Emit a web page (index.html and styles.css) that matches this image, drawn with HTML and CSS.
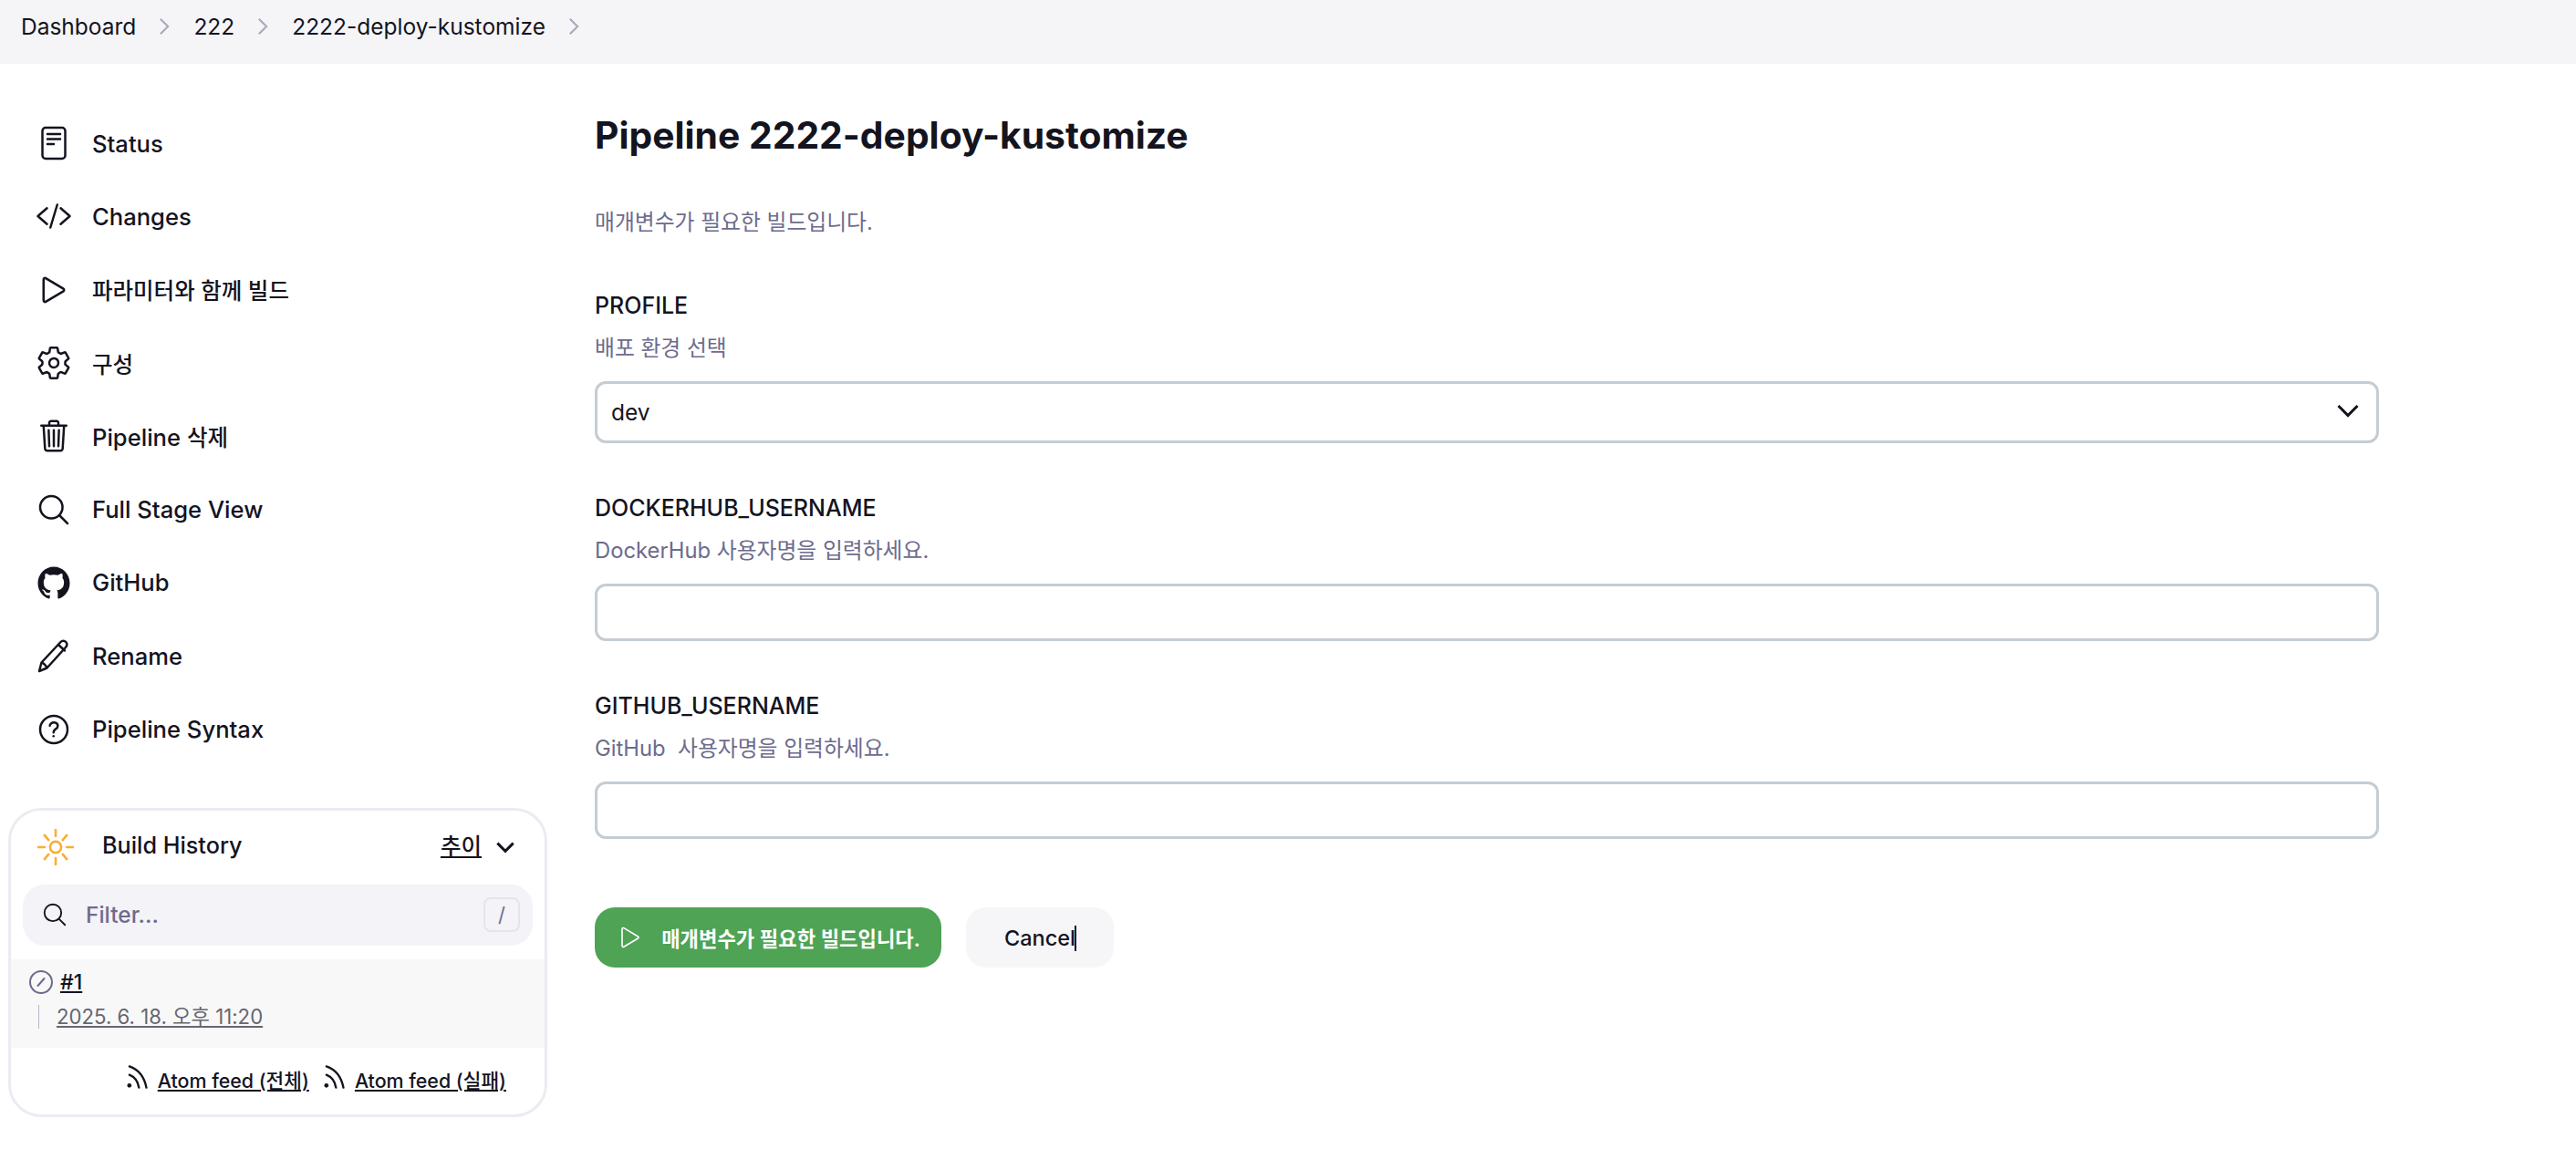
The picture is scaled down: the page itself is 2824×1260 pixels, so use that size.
FILE: index.html
```html
<!DOCTYPE html>
<html lang="en">

<head>
    <meta charset="UTF-8">
    <meta name="viewport" content="width=device-width, initial-scale=1.0">
    <title>Pipeline 2222-deploy-kustomize</title>
    <link rel="stylesheet" href="styles.css">
</head>

<body>
    <nav class="breadcrumbs">
        <a href="#">Dashboard</a>
        <svg class="crumb-sep" viewBox="0 0 24 24"><path d="M7 2l10 10-10 10"/></svg>
        <a href="#">222</a>
        <svg class="crumb-sep" viewBox="0 0 24 24"><path d="M7 2l10 10-10 10"/></svg>
        <a href="#">2222-deploy-kustomize</a>
        <svg class="crumb-sep" viewBox="0 0 24 24"><path d="M7 2l10 10-10 10"/></svg>
    </nav>

    <div class="layout">
        <aside class="sidebar">
            <ul class="side-nav">
                <li>
                    <svg class="icon" viewBox="0 0 40 40"><rect x="7.5" y="3" width="25" height="34" rx="3.5"/><path d="M13 10h14M13 15.5h14M13 21h7"/></svg>
                    <span>Status</span>
                </li>
                <li>
                    <svg class="icon" viewBox="0 0 512 512"><path d="M160 368L32 256l128-112M352 368l128-112-128-112M304 96l-96 320"/></svg>
                    <span>Changes</span>
                </li>
                <li>
                    <svg class="icon" viewBox="0 0 512 512"><path d="M112 111v290c0 17.44 17 28.52 31 20.16l247.9-148.37c12.12-7.25 12.12-26.33 0-33.58L143 90.84c-14-8.36-31 2.72-31 20.16z"/></svg>
                    <span class="ko">파라미터와 함께 빌드</span>
                </li>
                <li>
                    <svg class="icon" viewBox="0 0 512 512"><path d="M262.29 192.31a64 64 0 1057.4 57.4 64.13 64.13 0 00-57.4-57.4zM416.39 256a154.34 154.34 0 01-1.53 20.79l45.21 35.46a10.81 10.81 0 012.45 13.75l-42.77 74a10.81 10.81 0 01-13.14 4.59l-44.9-18.08a16.11 16.11 0 00-15.17 1.75A164.48 164.48 0 01325 400.8a15.94 15.94 0 00-8.82 12.14l-6.73 47.89a11.08 11.08 0 01-10.68 9.17h-85.54a11.11 11.11 0 01-10.69-8.87l-6.72-47.82a16.07 16.07 0 00-9-12.22 155.3 155.3 0 01-21.46-12.57 16 16 0 00-15.11-1.71l-44.89 18.07a10.81 10.81 0 01-13.14-4.58l-42.77-74a10.8 10.8 0 012.45-13.75l38.21-30a16.05 16.05 0 006-14.08c-.36-4.17-.58-8.33-.58-12.5s.21-8.27.58-12.35a16 16 0 00-6.07-13.94l-38.19-30A10.81 10.81 0 0149.48 186l42.77-74a10.81 10.81 0 0113.14-4.59l44.9 18.08a16.11 16.11 0 0015.17-1.75A164.48 164.48 0 01187 111.2a15.94 15.94 0 008.82-12.14l6.73-47.89A11.08 11.08 0 01213.23 42h85.54a11.11 11.11 0 0110.69 8.87l6.72 47.82a16.07 16.07 0 009 12.22 155.3 155.3 0 0121.46 12.57 16 16 0 0015.11 1.71l44.89-18.07a10.81 10.81 0 0113.14 4.58l42.77 74a10.8 10.8 0 01-2.45 13.75l-38.21 30a16.05 16.05 0 00-6.05 14.08c.33 4.14.55 8.3.55 12.47z"/></svg>
                    <span class="ko">구성</span>
                </li>
                <li>
                    <svg class="icon" viewBox="0 0 512 512"><path d="M112 112l20 320c.95 18.49 14.4 32 32 32h184c17.67 0 30.87-13.51 32-32l20-320M80 112h352M192 112V72a23.93 23.93 0 0124-24h80a23.93 23.93 0 0124 24v40M256 176v224M184 176l8 224M328 176l-8 224"/></svg>
                    <span>Pipeline <span class="ko">삭제</span></span>
                </li>
                <li>
                    <svg class="icon" viewBox="0 0 512 512"><path d="M221.09 64a157.09 157.09 0 10157.09 157.09A157.1 157.1 0 00221.09 64zM338.29 338.29L448 448"/></svg>
                    <span>Full Stage View</span>
                </li>
                <li>
                    <svg class="icon icon-solid" viewBox="0 0 512 512"><path d="M256 32C132.3 32 32 134.9 32 261.7c0 101.5 64.2 187.5 153.2 217.9a17.56 17.56 0 003.8.4c8.3 0 11.5-6.1 11.5-11.4 0-5.5-.2-19.9-.3-39.1a102.4 102.4 0 01-22.6 2.7c-43.1 0-52.9-33.5-52.9-33.5-10.2-26.5-24.9-33.6-24.9-33.6-19.5-13.7-.1-14.1 1.4-14.1h.1c22.5 2 34.3 23.8 34.3 23.8 11.2 19.6 26.2 25.1 39.6 25.1a63 63 0 0025.6-6c2-14.8 7.8-24.9 14.2-30.7-49.7-5.8-102-25.5-102-113.5 0-25.1 8.7-45.6 23-61.6-2.3-5.8-10-29.2 2.2-60.8a18.64 18.64 0 015-.5c8.1 0 26.4 3.1 56.6 24.1a208.21 208.21 0 01112.2 0c30.2-21 48.5-24.1 56.6-24.1a18.64 18.64 0 015 .5c12.2 31.6 4.5 55 2.2 60.8 14.3 16.1 23 36.6 23 61.6 0 88.2-52.4 107.6-102.3 113.3 8 7.1 15.2 21.1 15.2 42.5 0 30.7-.3 55.5-.3 63 0 5.4 3.1 11.5 11.4 11.5a19.35 19.35 0 004-.4C415.9 449.2 480 363.1 480 261.7 480 134.9 379.7 32 256 32z"/></svg>
                    <span>GitHub</span>
                </li>
                <li>
                    <svg class="icon" viewBox="0 0 40 40"><path d="M4 37l2.5-9.5L27.5 5a4 4 0 015.8 0 4 4 0 010 5.5L12.5 33.5zM6.5 27.5c2 .4 5 3.5 6 6M25 8l7 6.5"/></svg>
                    <span>Rename</span>
                </li>
                <li>
                    <svg class="icon" viewBox="0 0 512 512"><path d="M256 64C150 64 64 150 64 256s86 192 192 192 192-86 192-192S362 64 256 64z"/><path d="M200 202.29s.84-17.5 19.57-32.57C230.68 160.77 244 158.18 256 158c10.93-.14 20.69 1.67 26.53 4.45 10 4.76 29.47 16.38 29.47 41.09 0 26-17 37.81-36.37 50.8S252 281.86 252 296"/><circle class="dot" cx="252" cy="348" r="16"/></svg>
                    <span>Pipeline Syntax</span>
                </li>
            </ul>

            <section class="history">
                <header class="history-head">
                    <svg class="sun" viewBox="0 0 46 46"><circle cx="23" cy="23" r="7"/><path d="M23 1v8M23 37v8M1 23h8M37 23h8M9 8l5 6M32 32l5 6M9 38l5-6M32 14l5-6"/></svg>
                    <h2>Build History</h2>
                    <a class="trend" href="#">추이</a>
                    <svg class="trend-chevron" viewBox="0 0 24 24"><path d="M4 8l8 8 8-8"/></svg>
                </header>

                <div class="filter">
                    <svg class="icon filter-icon" viewBox="0 0 512 512"><path d="M221.09 64a157.09 157.09 0 10157.09 157.09A157.1 157.1 0 00221.09 64zM338.29 338.29L448 448"/></svg>
                    <input type="text" placeholder="Filter...">
                    <kbd>/</kbd>
                </div>

                <div class="build-row">
                    <div class="build-id">
                        <svg class="build-status" viewBox="0 0 28 28"><circle cx="14" cy="14" r="12"/><path d="M10.5 18l7-8"/></svg>
                        <a href="#">#1</a>
                    </div>
                    <div class="build-date"><a href="#">2025. 6. 18. 오후 11:20</a></div>
                </div>

                <footer class="feeds">
                    <svg class="rss" viewBox="0 0 24 24"><circle cx="5" cy="20" r="2"/><path d="M5 10c5 2 8 6 9 12M5 2c9 3 14 10 16 20"/></svg>
                    <a href="#">Atom feed (전체)</a>
                    <svg class="rss" viewBox="0 0 24 24"><circle cx="5" cy="20" r="2"/><path d="M5 10c5 2 8 6 9 12M5 2c9 3 14 10 16 20"/></svg>
                    <a href="#">Atom feed (실패)</a>
                </footer>
            </section>
        </aside>

        <main class="content">
            <h1>Pipeline 2222-deploy-kustomize</h1>
            <p class="description">매개변수가 필요한 빌드입니다.</p>

            <div class="param">
                <label for="profile">PROFILE</label>
                <p class="help">배포 환경 선택</p>
                <div class="select-wrap">
                    <select id="profile">
                        <option>dev</option>
                    </select>
                    <svg class="select-chevron" viewBox="0 0 24 24"><path d="M3 6l9 9 9-9"/></svg>
                </div>
            </div>

            <div class="param">
                <label for="dockerhub">DOCKERHUB_USERNAME</label>
                <p class="help">DockerHub 사용자명을 입력하세요.</p>
                <input class="text-input" type="text" id="dockerhub">
            </div>

            <div class="param">
                <label for="github">GITHUB_USERNAME</label>
                <p class="help">GitHub&nbsp; 사용자명을 입력하세요.</p>
                <input class="text-input" type="text" id="github">
            </div>

            <div class="actions">
                <button class="btn-build">
                    <svg viewBox="0 0 512 512"><path d="M112 111v290c0 17.44 17 28.52 31 20.16l247.9-148.37c12.12-7.25 12.12-26.33 0-33.58L143 90.84c-14-8.36-31 2.72-31 20.16z"/></svg>
                    매개변수가 필요한 빌드입니다.
                </button>
                <button class="btn-cancel"><span class="cancel-label">Cancel</span></button>
            </div>
        </main>
    </div>
</body>

</html>
```

FILE: styles.css
```css
* {
    box-sizing: border-box;
    margin: 0;
    padding: 0;
    font-family: Inter, 'Noto Sans CJK KR', sans-serif;
}

body {
    background: #fff;
    color: #14141f;
    font-size: 24.5px;
    min-height: 100vh;
}

a {
    color: inherit;
}

/* breadcrumbs */
.breadcrumbs {
    height: 70px;
    background: #f5f5f8;
    display: flex;
    align-items: flex-start;
    padding: 14px 0 0 23px;
}

.breadcrumbs a {
    text-decoration: none;
    line-height: 30px;
}

.crumb-sep {
    width: 20px;
    height: 20px;
    margin: 5px 22px 0 21px;
    fill: none;
    stroke: #a9a9b8;
    stroke-width: 2.5;
}

.layout {
    display: grid;
    grid-template-columns: 652px 1fr;
}

/* sidebar */
.sidebar {
    padding: 47px 52px 0 9px;
}

.side-nav {
    list-style: none;
    margin-bottom: 46px;
}

.side-nav li {
    display: flex;
    align-items: center;
    gap: 22px;
    height: 80.3px;
    padding-left: 30px;
    font-size: 25.6px;
    font-weight: 450;
}

.ko {
    font-size: 24.5px;
}

.icon {
    width: 40px;
    height: 40px;
    fill: none;
    stroke: #14141f;
    stroke-width: 32;
    stroke-linecap: round;
    stroke-linejoin: round;
    flex-shrink: 0;
}

.side-nav li svg[viewBox="0 0 40 40"] {
    stroke-width: 2.5;
}

.icon-solid {
    fill: #14141f;
    stroke: none;
}

.icon .dot {
    fill: #14141f;
    stroke: none;
}

/* build history */
.history {
    height: 339px;
    border: 3px solid #ebebf3;
    border-radius: 36px;
    overflow: hidden;
}

.history-head {
    display: flex;
    align-items: center;
    height: 76px;
    padding: 0 30px 0 29px;
}

.sun {
    width: 40px;
    height: 40px;
    margin: 4px 31px 0 0;
    fill: none;
    stroke: #f9ae33;
    stroke-width: 3;
    stroke-linecap: round;
}

.history-head h2 {
    font-size: 25.2px;
    font-weight: 500;
    flex: 1;
}

.trend {
    font-weight: 500;
    margin-right: 2px;
}

.trend-chevron {
    width: 26px;
    height: 26px;
    margin-left: 11px;
    margin-top: 4px;
    fill: none;
    stroke: #14141f;
    stroke-width: 2.8;
}

.filter {
    display: flex;
    align-items: center;
    height: 67px;
    margin: 5px 13px 0;
    padding: 0 14px 0 20px;
    background: #f3f3f8;
    border-radius: 24px;
}

.filter-icon {
    width: 30px;
    height: 30px;
}

.filter input {
    flex: 1;
    min-width: 0;
    margin-left: 19px;
    border: none;
    background: none;
    font-size: 24.5px;
    font-weight: 500;
    outline: none;
}

.filter input::placeholder {
    color: #6d6b8d;
    opacity: 1;
}

.filter kbd {
    width: 40px;
    height: 38px;
    border: 2px solid #e4e4ec;
    border-radius: 8px;
    display: flex;
    align-items: center;
    justify-content: center;
    font-size: 22px;
    color: #6d6b8d;
}

.build-row {
    margin-top: 15px;
    height: 97px;
    background: #f8f8f8;
    padding: 11px 0 0 19px;
}

.build-id {
    display: flex;
    align-items: center;
    gap: 7px;
    font-weight: 500;
    font-size: 23px;
}

.build-status {
    width: 28px;
    height: 28px;
    fill: none;
    stroke: #6d6b8d;
    stroke-width: 2;
    stroke-linecap: round;
}

.build-date {
    margin: 11px 0 0 11px;
    padding-left: 19px;
    border-left: 1px solid #b8b8c8;
    font-size: 22.2px;
    line-height: 26px;
    color: #66666f;
}

.feeds {
    display: flex;
    align-items: center;
    justify-content: flex-end;
    height: 70px;
    padding-right: 42px;
    font-size: 21.4px;
    font-weight: 500;
}

.rss {
    width: 28px;
    height: 30px;
    margin: 0 9px 6px 13px;
    fill: #14141f;
    stroke: none;
    flex-shrink: 0;
}

.rss path {
    fill: none;
    stroke: #14141f;
    stroke-width: 2;
    stroke-linecap: round;
}

/* main form */
.content {
    padding: 0 216px 0 0;
}

h1 {
    font-size: 40.8px;
    font-weight: 700;
    line-height: 50px;
    margin-top: 53px;
    margin-bottom: 55px;
}

.description,
.help {
    color: #6d6b8d;
    font-size: 23.8px;
}

.description {
    line-height: 32px;
    margin-bottom: 59px;
}

.param {
    margin-bottom: 55px;
}

.param label {
    display: block;
    font-size: 25px;
    font-weight: 450;
    line-height: 32px;
    margin-bottom: 15px;
}

.help {
    line-height: 32px;
    margin-bottom: 20px;
}

.select-wrap {
    position: relative;
}

.select-wrap select,
.text-input {
    display: block;
    width: 100%;
    border: 3px solid #c4ccd4;
    border-radius: 12px;
    background: #fff;
    font-size: 24.5px;
    color: #14141f;
    outline: none;
    appearance: none;
}

.select-wrap select {
    height: 68px;
    padding: 0 15px;
}

.text-input {
    height: 63px;
    padding: 0 15px;
}

.select-chevron {
    position: absolute;
    right: 20px;
    top: 20px;
    width: 28px;
    height: 28px;
    fill: none;
    stroke: #14141f;
    stroke-width: 2.6;
    pointer-events: none;
}

.actions {
    display: flex;
    gap: 27px;
    margin-top: 75px;
}

.actions button {
    height: 66px;
    border: none;
    border-radius: 22px;
    font-size: 22.2px;
    font-weight: 600;
    display: flex;
    align-items: center;
    justify-content: center;
}

.btn-build {
    width: 380px;
    background: #4ea354;
    color: #fff;
    gap: 18px;
}

.btn-build svg {
    width: 32px;
    height: 32px;
    fill: none;
    stroke: #fff;
    stroke-width: 26;
    stroke-linejoin: round;
}

.btn-cancel {
    width: 162px;
    background: #f6f6f9;
    color: #14141f;
}

.actions .btn-cancel {
    font-size: 23.5px;
    font-weight: 500;
}

.cancel-label {
    position: relative;
}

/* text cursor caught in the shot */
.cancel-label::after {
    content: "";
    position: absolute;
    right: -1px;
    top: 1px;
    bottom: 0;
    width: 2px;
    background: #14141f;
}
```
